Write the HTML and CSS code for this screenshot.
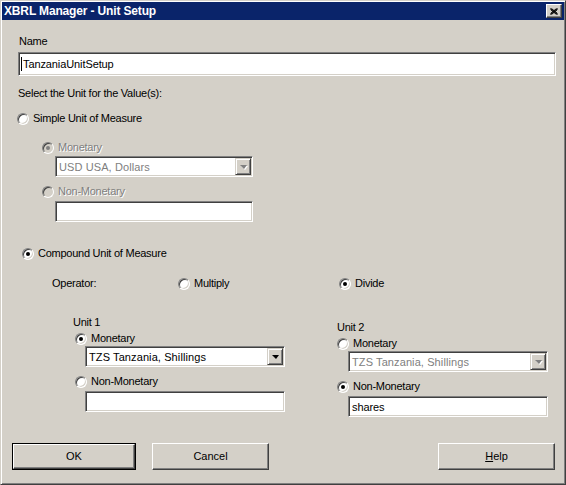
FILE: index.html
```html
<!DOCTYPE html>
<html>
  <head>
    <meta charset="utf-8">
    <title>XBRL Manager - Unit Setup</title>
    <link rel="stylesheet" href="styles.css">
  </head>
  <body>
    <div class="window">
      <div class="titlebar">
        <span class="title">XBRL Manager - Unit Setup</span>
        <span class="close-btn">
          <svg width="8" height="7" viewBox="0 0 8 7">
            <path d="M0.5 0.5 L7.5 6.5 M1.5 0.5 L7.5 5.5 M0.5 1.5 L6.5 6.5 M7.5 0.5 L0.5 6.5 M6.5 0.5 L0.5 5.5 M7.5 1.5 L1.5 6.5" stroke="#000" stroke-width="1" fill="none"/>
          </svg>
        </span>
      </div>

      <div class="dialog-body">
        <div class="label name-label">Name</div>
        <div class="field name-field"><span class="caret"></span>TanzaniaUnitSetup</div>

        <div class="label select-label">Select the Unit for the Value(s):</div>

        <div class="option simple-option"><span class="radio"></span>Simple Unit of Measure</div>
        <div class="simple-group disabled">
          <div class="option"><span class="radio checked"></span>Monetary</div>
          <div class="combo">
            <span class="combo-text">USD USA, Dollars</span>
            <span class="combo-btn"><span class="arrow"></span></span>
          </div>
          <div class="option gap-option"><span class="radio"></span>Non-Monetary</div>
          <div class="field short-field"></div>
        </div>

        <div class="option compound-option"><span class="radio checked"></span>Compound Unit of Measure</div>

        <div class="operator-row">
          <span class="operator-label">Operator:</span>
          <span class="option multiply"><span class="radio"></span>Multiply</span>
          <span class="option divide"><span class="radio checked"></span>Divide</span>
        </div>

        <div class="units">
          <div class="unit unit-one">
            <div class="label">Unit 1</div>
            <div class="option unit-radio"><span class="radio checked"></span>Monetary</div>
            <div class="combo">
              <span class="combo-text">TZS Tanzania, Shillings</span>
              <span class="combo-btn"><span class="arrow"></span></span>
            </div>
            <div class="option unit-radio gap-option"><span class="radio"></span>Non-Monetary</div>
            <div class="field short-field"></div>
          </div>
          <div class="unit unit-two">
            <div class="label">Unit 2</div>
            <div class="option unit-radio"><span class="radio"></span>Monetary</div>
            <div class="combo disabled">
              <span class="combo-text">TZS Tanzania, Shillings</span>
              <span class="combo-btn"><span class="arrow"></span></span>
            </div>
            <div class="option unit-radio gap-option"><span class="radio checked"></span>Non-Monetary</div>
            <div class="field short-field">shares</div>
          </div>
        </div>
      </div>

      <div class="button-row">
        <div class="default-ring"><button type="button" class="btn ok-btn">OK</button></div>
        <button type="button" class="btn cancel-btn">Cancel</button>
        <button type="button" class="btn help-btn"><u>H</u>elp</button>
      </div>
    </div>
  </body>
</html>
```

FILE: styles.css
```css
:root {
  --face: #d4d0c8;
  --shadow: #808080;
  --dark: #404040;
  --light: #ffffff;
  --title-bg: #0a246a;
  --disabled-text: #808080;
}

html, body {
  margin: 0;
  padding: 0;
}

body {
  width: 566px;
  height: 485px;
  overflow: hidden;
  font-family: "Liberation Sans", Arial, sans-serif;
  font-size: 11px;
  line-height: 13px;
  letter-spacing: -0.25px;
  color: #000;
}

.window {
  box-sizing: border-box;
  width: 566px;
  height: 485px;
  display: flex;
  flex-direction: column;
  padding: 1px;
  background: var(--face);
  border: 1px solid;
  border-color: var(--face) var(--dark) var(--dark) var(--face);
  box-shadow: inset 1px 1px var(--light), inset -1px -1px var(--shadow);
}

/* title bar */

.titlebar {
  height: 18px;
  display: flex;
  align-items: center;
  justify-content: space-between;
  padding: 0 2px 0 2px;
  background: var(--title-bg);
}

.title {
  color: #fff;
  font-weight: bold;
  font-size: 12px;
  letter-spacing: -0.15px;
}

.close-btn {
  box-sizing: border-box;
  width: 16px;
  height: 14px;
  display: flex;
  align-items: center;
  justify-content: center;
  background: var(--face);
  border: 1px solid;
  border-color: var(--light) var(--dark) var(--dark) var(--light);
  box-shadow: inset -1px -1px var(--shadow);
}

/* body */

.dialog-body {
  padding: 0 8px 0 16px;
}

.label {
  height: 13px;
}

.name-label {
  margin-top: 15px;
  margin-left: 1px;
}

.field {
  box-sizing: border-box;
  height: 21px;
  padding: 2px 3px;
  background: #fff;
  border: 1px solid;
  border-color: var(--shadow) var(--light) var(--light) var(--shadow);
  box-shadow: inset 1px 1px var(--dark), inset -1px -1px var(--face);
  white-space: nowrap;
  letter-spacing: -0.1px;
  line-height: 16px;
}

.name-field {
  height: 24px;
  margin-top: 4px;
  padding: 4px 2px;
  line-height: 15px;
}

.caret {
  display: inline-block;
  width: 1px;
  height: 14px;
  margin-right: 1px;
  vertical-align: -3px;
  background: #000;
}

.select-label {
  margin-top: 11px;
}

.option {
  display: flex;
  align-items: center;
  height: 13px;
}

.radio {
  position: relative;
  box-sizing: border-box;
  flex: none;
  width: 12px;
  height: 12px;
  margin-right: 4px;
  border-radius: 50%;
  background: #fff;
  border: 1px solid;
  border-color: var(--shadow) var(--light) var(--light) var(--shadow);
  box-shadow: inset 1px 1px var(--dark), inset -1px -1px var(--face);
}

.radio.checked::after {
  content: "";
  position: absolute;
  left: 3px;
  top: 3px;
  width: 4px;
  height: 4px;
  border-radius: 50%;
  background: #000;
}

.simple-option {
  margin-top: 12px;
  margin-left: -1px;
}

.simple-group {
  padding-left: 24px;
}

.simple-group .option {
  margin-top: 16px;
}

.simple-group .gap-option {
  margin-top: 8px;
}

.simple-group .combo,
.simple-group .field {
  margin-left: 13px;
  width: 198px;
}

.simple-group .field {
  margin-top: 3px;
}

.disabled {
  color: var(--disabled-text);
}

.disabled .option {
  text-shadow: 1px 1px var(--light);
}

.disabled .radio {
  background: var(--face);
}

.disabled .radio.checked::after {
  background: var(--shadow);
}

/* combo box */

.combo {
  box-sizing: border-box;
  display: flex;
  align-items: center;
  height: 21px;
  margin-top: 2px;
  padding: 2px;
  background: #fff;
  border: 1px solid;
  border-color: var(--shadow) var(--light) var(--light) var(--shadow);
  box-shadow: inset 1px 1px var(--dark), inset -1px -1px var(--face);
}

.combo-text {
  flex: 1;
  padding-left: 1px;
  padding-top: 1px;
  white-space: nowrap;
  letter-spacing: 0.1px;
}

.combo-btn {
  box-sizing: border-box;
  display: flex;
  align-items: center;
  justify-content: center;
  width: 16px;
  height: 17px;
  margin: -1px -1px -1px 0;
  background: var(--face);
  border: 1px solid;
  border-color: var(--face) var(--dark) var(--dark) var(--face);
  box-shadow: inset 1px 1px var(--light), inset -1px -1px var(--shadow);
}

.arrow {
  width: 0;
  height: 0;
  border-left: 4px solid transparent;
  border-right: 3px solid transparent;
  border-top: 4px solid #000;
}

.disabled .arrow {
  border-top-color: var(--shadow);
  filter: drop-shadow(1px 1px 0 var(--light));
}

/* compound */

.compound-option {
  margin-top: 25px;
  margin-left: 4px;
}

.operator-row {
  display: flex;
  align-items: center;
  height: 13px;
  margin-top: 17px;
  padding-left: 34px;
}

.operator-label {
  width: 126px;
}

.multiply {
  width: 161px;
}

.units {
  display: flex;
  margin-top: 26px;
  padding-left: 55px;
}

.unit {
  width: 213px;
}

.unit-one {
  width: 264px;
}

.unit-two {
  margin-top: 5px;
}

.unit-radio {
  margin-top: 3px;
}

.unit-one .unit-radio {
  margin-left: 2px;
}

.unit .gap-option {
  margin-top: 8px;
}

.unit .combo,
.unit .field {
  width: 200px;
  margin-top: 1px;
}

.unit .field {
  margin-top: 3px;
}

.unit-one .combo,
.unit-one .field {
  margin-left: 12px;
}

.unit-two .combo,
.unit-two .field {
  margin-left: 11px;
}

.combo.disabled .combo-text {
  color: var(--disabled-text);
}

/* buttons */

.button-row {
  display: flex;
  align-items: center;
  margin-top: auto;
  padding: 0 0 13px 10px;
}

.default-ring {
  border: 1px solid #000;
  display: flex;
}

.btn {
  box-sizing: border-box;
  height: 27px;
  padding: 0;
  font: inherit;
  color: #000;
  background: var(--face);
  border: 1px solid;
  border-color: var(--light) var(--dark) var(--dark) var(--light);
  box-shadow: inset -1px -1px var(--shadow);
}

.ok-btn {
  width: 122px;
  height: 25px;
}

.cancel-btn {
  width: 117px;
  margin-left: 16px;
}

.help-btn {
  width: 117px;
  margin-left: 169px;
}
```
